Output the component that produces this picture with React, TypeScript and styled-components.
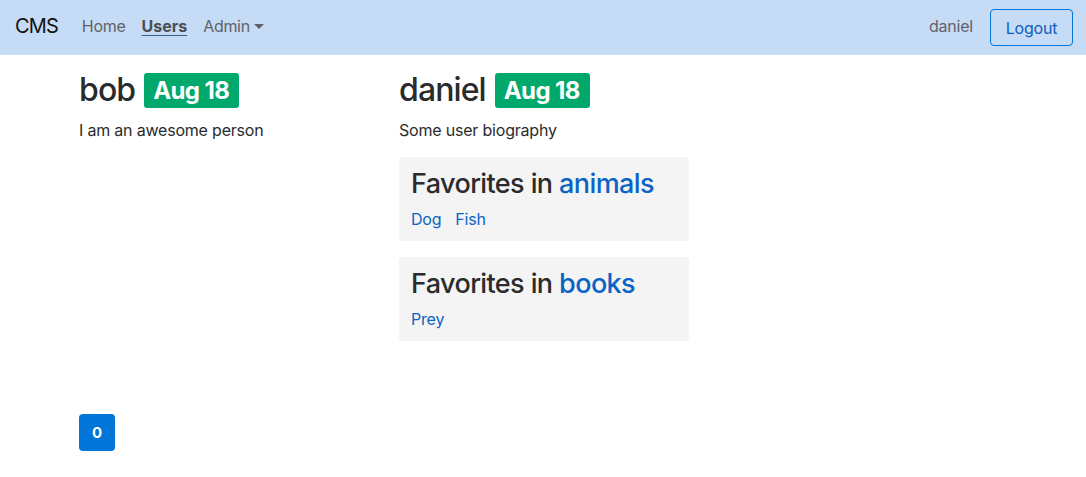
import React from "react";
import styled, { createGlobalStyle } from "styled-components";

const Global = createGlobalStyle`
  html, body { margin: 0; padding: 0; background: #fff; }
  body {
    font-family: Inter, "Noto Sans", "Liberation Sans", sans-serif;
    font-size: 16px;
    line-height: 1.5;
    color: #292b2c;
  }
  * { box-sizing: border-box; }
`;

const Navbar = styled.nav`
  height: 55px;
  background: #c6dbf5;
  display: flex;
  align-items: center;
  padding: 0 13px 0 15px;
`;

const Brand = styled.a`
  font-size: 20px;
  color: #111;
  margin-right: 16px;
  text-decoration: none;
  letter-spacing: -0.9px;
`;

const NavList = styled.div`
  display: flex;
  align-items: center;
  flex: 1;
  margin-bottom: 3px;
`;

const NavLink = styled.a<{ $active?: boolean }>`
  padding: 0 8px;
  font-size: 16px;
  letter-spacing: ${(p) => (p.$active ? "0" : "-0.3px")};
  color: ${(p) => (p.$active ? "#4a4d52" : "#5f6368")};
  font-weight: ${(p) => (p.$active ? 700 : 400)};
  text-decoration: ${(p) => (p.$active ? "underline" : "none")};
  text-decoration-color: #3a5f8a;
  text-underline-offset: 3px;
  display: inline-flex;
  align-items: center;
`;

const Caret = styled.span`
  display: inline-block;
  margin-left: 4px;
  border-top: 5px solid #5f6368;
  border-left: 5px solid transparent;
  border-right: 5px solid transparent;
`;

const UserName = styled.span`
  color: #5f6368;
  margin: 0 17px 3px 0;
  letter-spacing: -0.2px;
`;

const OutlineButton = styled.button`
  font-family: inherit;
  font-size: 16px;
  height: 37px;
  width: 83px;
  color: #0a5fbe;
  background: transparent;
  border: 1px solid #0275d8;
  border-radius: 4px;
  cursor: pointer;
  letter-spacing: -0.2px;
`;

const Container = styled.main`
  width: 960px;
  margin: 0 auto;
  padding: 16px 15px 0 16px;
`;

const Row = styled.div`
  display: grid;
  grid-template-columns: 320px 320px 290px;
`;

const Col = styled.section`
  padding-right: 30px;
`;

const Heading = styled.h2`
  margin: 0 0 9px;
  font-size: 32px;
  font-weight: 500;
  line-height: 38px;
  display: flex;
  align-items: center;
  letter-spacing: -0.9px;
`;

const Badge = styled.span`
  display: inline-block;
  margin-left: 9px;
  background: #00a86b;
  color: #fff;
  font-size: 24px;
  font-weight: 700;
  line-height: 24px;
  padding: 6px 10px 5px 9px;
  border-radius: 3px;
  letter-spacing: -0.6px;
`;

const Bio = styled.p`
  margin: 0 0 15px;
  font-size: 16px;
  line-height: 24px;
  letter-spacing: -0.2px;
`;

const Card = styled.div`
  background: #f4f4f4;
  border-radius: 4px;
  padding: 10px 12px 6px;
  margin-bottom: 16px;
  height: 84px;
`;

const CardTitle = styled.h3`
  margin: 0 0 6px;
  font-size: 27px;
  font-weight: 500;
  line-height: 34px;
  letter-spacing: -0.6px;
`;

const Link = styled.a`
  color: #0b63c5;
  text-decoration: none;
`;

const Items = styled.div`
  display: flex;
  gap: 14px;
  font-size: 16px;
  line-height: 24px;
  letter-spacing: -0.2px;
`;

const Footer = styled.div`
  margin-top: 57px;
`;

const CountButton = styled.button`
  font-family: inherit;
  width: 36px;
  height: 37px;
  border: none;
  border-radius: 4px;
  background: #0275d8;
  color: #fff;
  font-weight: 700;
  font-size: 15px;
`;

type Fav = { category: string; items: string[] };
type User = { name: string; date: string; bio: string; favs: Fav[] };

const users: User[] = [
  { name: "bob", date: "Aug 18", bio: "I am an awesome person", favs: [] },
  {
    name: "daniel",
    date: "Aug 18",
    bio: "Some user biography",
    favs: [
      { category: "animals", items: ["Dog", "Fish"] },
      { category: "books", items: ["Prey"] },
    ],
  },
];

export default function App() {
  return (
    <>
      <Global />
      <Navbar>
        <NavList>
          <Brand>CMS</Brand>
          <NavLink>Home</NavLink>
          <NavLink $active>Users</NavLink>
          <NavLink>
            Admin <Caret />
          </NavLink>
        </NavList>
        <UserName>daniel</UserName>
        <OutlineButton>Logout</OutlineButton>
      </Navbar>
      <Container>
        <Row>
          {users.map((u) => (
            <Col key={u.name}>
              <Heading>
                {u.name}
                <Badge>{u.date}</Badge>
              </Heading>
              <Bio>{u.bio}</Bio>
              {u.favs.map((f) => (
                <Card key={f.category}>
                  <CardTitle>
                    Favorites in <Link>{f.category}</Link>
                  </CardTitle>
                  <Items>
                    {f.items.map((i) => (
                      <Link key={i}>{i}</Link>
                    ))}
                  </Items>
                </Card>
              ))}
            </Col>
          ))}
        </Row>
        <Footer>
          <CountButton>0</CountButton>
        </Footer>
      </Container>
    </>
  );
}
